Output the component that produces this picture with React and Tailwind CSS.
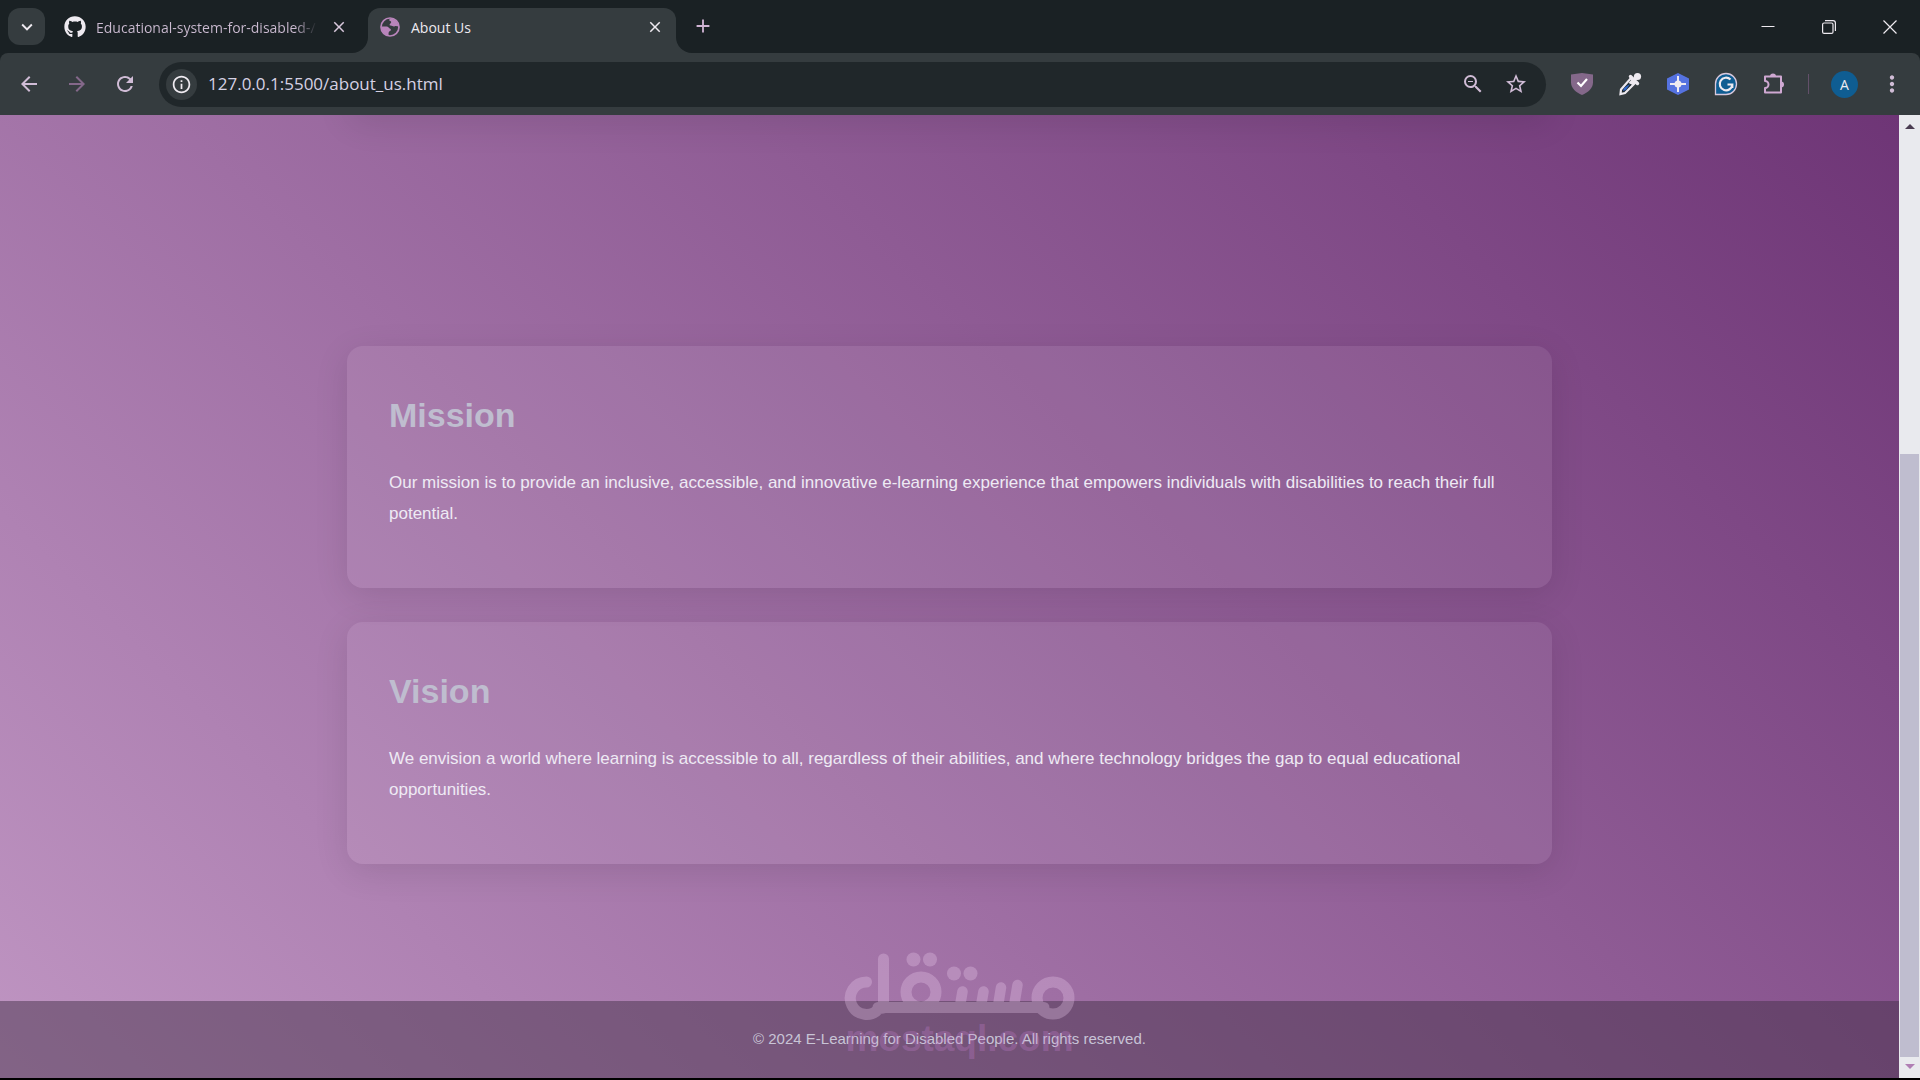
import React from 'react';
import {
  MdArrowBack,
  MdArrowForward,
  MdRefresh,
  MdOutlineInfo,
  MdZoomOut,
  MdStarBorder,
  MdMoreVert,
  MdClose,
  MdAdd,
  MdKeyboardArrowDown,
} from 'react-icons/md';
import { FaGithub } from 'react-icons/fa';

const sections = [
  {
    title: 'Mission',
    text: 'Our mission is to provide an inclusive, accessible, and innovative e-learning experience that empowers individuals with disabilities to reach their full potential.',
  },
  {
    title: 'Vision',
    text: 'We envision a world where learning is accessible to all, regardless of their abilities, and where technology bridges the gap to equal educational opportunities.',
  },
];

const GlobeIcon = () => (
  <svg width="20" height="20" viewBox="0 0 20 20" fill="none">
    <circle cx="10" cy="10" r="9" stroke="#b985bb" strokeWidth="1.7" />
    <path d="M10 1.5c-1 .8-1 2.2.2 2.6 1.5.4 1.2 1.6.2 2.3-1.2.8-1 2 .2 2.2 1.8.2 2.6 1.2 4.2.6 1.5-.5 2.6.2 3.7.4C18.300 4.800 14.800 1.500 10 1.500z" fill="#b985bb" />
    <path d="M1.4 9.5h5.200c1.800 0 2 1.500 3.200 2 1.400.5 1.600 2 .2 2.600-1.200.5-1.600 1.500-1.400 4.500C4.500 18 1.300 14 1.400 9.500z" fill="#b985bb" />
  </svg>
);

const TabStrip = () => (
  <div className="flex h-[53px] shrink-0 items-end bg-[#1a2124]">
    <button aria-label="Search tabs" className="mb-2 ml-2 flex h-[37px] w-[37px] items-center justify-center rounded-xl bg-[#353c3f] text-[#eeeaf0]">
      <MdKeyboardArrowDown size={22} />
    </button>

    <div className="ml-[19px] flex h-[45px] w-[304px] items-center pb-[7px]">
      <FaGithub size={22} className="shrink-0 text-[#eeeaf0]" />
      <span className="ml-[10px] w-[221px] overflow-hidden whitespace-nowrap bg-linear-to-r from-[#ccbcd2] from-90% to-transparent bg-clip-text text-[14px] text-transparent">
        Educational-system-for-disabled-/
      </span>
      <button aria-label="Close tab" className="ml-[13px] text-[#d8c8dc]">
        <MdClose size={18} />
      </button>
    </div>

    <div className="relative flex h-[45px] w-[308px] items-center rounded-t-xl bg-[#353c3f] px-3 pb-[7px]">
      <span className="absolute bottom-0 -left-4 h-4 w-4 overflow-hidden">
        <span className="block h-4 w-4 rounded-br-2xl shadow-[8px_8px_0_8px_#353c3f]" />
      </span>
      <span className="absolute -right-4 bottom-0 h-4 w-4 overflow-hidden">
        <span className="block h-4 w-4 rounded-bl-2xl shadow-[-8px_8px_0_8px_#353c3f]" />
      </span>
      <GlobeIcon />
      <span className="ml-[11px] flex-1 text-[14px] text-[#eeeaf0]">About Us</span>
      <button aria-label="Close tab" className="text-[#eeeaf0]">
        <MdClose size={18} />
      </button>
    </div>
    <button aria-label="New tab" className="mb-4 ml-4 text-[#d0b4d4]">
      <MdAdd size={22} />
    </button>

    <div className="ml-auto flex h-full items-center text-[#eeeaf0]">
      <button aria-label="Minimize" className="flex w-[61px] justify-center">
        <svg width="14" height="14" viewBox="0 0 14 14" stroke="currentColor">
          <path d="M0.5 6.5h13" />
        </svg>
      </button>
      <button aria-label="Restore" className="flex w-[61px] justify-center">
        <svg width="14" height="14" viewBox="0 0 14 14" fill="none" stroke="currentColor" strokeWidth="1.2">
          <rect x="0.6" y="3" width="10.4" height="10.4" rx="1.5" />
          <path d="M3 .6h8a2.4 2.4 0 0 1 2.4 2.4v8" />
        </svg>
      </button>
      <button aria-label="Close" className="flex w-[61px] justify-center">
        <svg width="14" height="14" viewBox="0 0 14 14" stroke="currentColor" strokeWidth="1.2">
          <path d="M.5.5l13 13M13.5.5l-13 13" />
        </svg>
      </button>
    </div>
  </div>
);

const ShieldIcon = () => (
  <svg width="24" height="24" viewBox="0 0 24 24">
    <path d="M12 1l11 1.500v8C23 16 18 20.500 12 23 6 20.500 1 16 1 10.500v-8z" fill="#84688a" />
    <path d="M7.500 10.500l3.500 3.500 6-7" fill="none" stroke="#fff" strokeWidth="2.2" />
  </svg>
);

const DropperIcon = () => (
  <svg width="24" height="24" viewBox="0 0 24 24">
    <path d="M2.500 22l.5-4.500L13 6l4.500 4.500L7 21z" fill="#1f2a30" stroke="#eeeaf0" strokeWidth="2.200" />
    <path d="M5 19l1-3 3.500-2.500L12 12l-4 6z" fill="#2f66c8" />
    <path d="M10.500 11l4.500-5 3.500 3.500-4 3.500z" fill="#eeeaf0" />
    <path d="M12.500 4.500l7 7M15.500 8.500l4-4" stroke="#eeeaf0" strokeWidth="3.400" strokeLinecap="round" />
    <circle cx="19.500" cy="4.500" r="3.600" fill="#eeeaf0" />
  </svg>
);

const HexIcon = () => (
  <svg width="24" height="24" viewBox="0 0 24 24">
    <path d="M12 1l11 5.500v11L12 23 1 17.500v-11z" fill="#5572e0" />
    <path d="M12 4v16M4 12h16" stroke="#eeeaf0" strokeWidth="2" />
    <circle cx="12" cy="12" r="3.500" fill="#eeeaf0" />
  </svg>
);

const GrammarIcon = () => (
  <svg width="24" height="24" viewBox="0 0 24 24">
    <path d="M1.500 22.500V12A10.500 10.500 0 1 1 12 22.500z" fill="#0f5d92" stroke="#d8c8dc" strokeWidth="1.300" />
    <path d="M16.500 7.600A6.300 6.300 0 1 0 18.300 12.500H13.500M18.300 12.500v3.500" fill="none" stroke="#eeeaf0" strokeWidth="2.200" />
  </svg>
);

const PuzzleIcon = () => (
  <svg width="24" height="24" viewBox="0 0 24 24">
    <path d="M3 4.500h16v16H3v-4.500a3.500 3.500 0 0 0 0-7z" fill="none" stroke="#cfa8d2" strokeWidth="2" strokeLinejoin="round" />
    <path d="M8 4.500a3 3 0 0 1 6 0zM19 9.500a3 3 0 0 1 0 6z" fill="#cfa8d2" />
  </svg>
);

const Toolbar = () => (
  <div className="bg-[#1a2124]">
    <div className="flex h-[62px] items-center rounded-t-lg bg-[#353c3f] pl-[17px] text-[#d0bcd6]">
      <button aria-label="Back"><MdArrowBack size={24} /></button>
      <button aria-label="Forward" className="ml-6 text-[#84688a]"><MdArrowForward size={24} /></button>
      <button aria-label="Reload" className="ml-6"><MdRefresh size={24} /></button>

      <div className="ml-[22px] flex h-[45px] flex-1 items-center rounded-full bg-[#20272a] pr-[18px] pl-[7px]">
        <button aria-label="Site information" className="flex h-[31px] w-[31px] items-center justify-center rounded-full bg-[#353c3f] text-[#eeeaf0]">
          <MdOutlineInfo size={21} />
        </button>
        <input
          aria-label="Address"
          className="ml-[11px] min-w-0 flex-1 bg-transparent pb-px text-[17px] text-[#d6d2e4] outline-none"
          defaultValue="127.0.0.1:5500/about_us.html"
        />
        <button aria-label="Zoom"><MdZoomOut size={24} /></button>
        <button aria-label="Bookmark" className="ml-[19px]"><MdStarBorder size={24} /></button>
      </div>

      <div className="ml-6 flex items-center gap-6">
        <button aria-label="Shield"><ShieldIcon /></button>
        <button aria-label="Color picker"><DropperIcon /></button>
        <button aria-label="Inspector"><HexIcon /></button>
        <button aria-label="Writing assistant"><GrammarIcon /></button>
        <button aria-label="Extensions"><PuzzleIcon /></button>
      </div>
      <span className="ml-[22px] h-5 w-px bg-[#63506a]" />
      <button aria-label="Profile" className="ml-[22px] flex h-[27px] w-[27px] items-center justify-center rounded-full bg-[#0f5d92] text-[14px] text-[#eeeaf0]">
        A
      </button>
      <button aria-label="Menu" className="mr-[15px] ml-[21px]"><MdMoreVert size={26} /></button>
    </div>
  </div>
);

const Scrollbar = () => (
  <div className="flex w-[21px] shrink-0 flex-col items-center bg-[#e9eaee]">
    <svg className="mt-2 shrink-0" width="12" height="6" viewBox="0 0 12 6">
      <path d="M1 6l5-5 5 5z" fill="#4b3d52" />
    </svg>
    <div className="flex w-full flex-1 flex-col justify-end px-px pb-[7px]">
      <div className="h-[65%] bg-[#bfbdcf]" />
    </div>
    <svg className="mb-2 shrink-0" width="12" height="6" viewBox="0 0 12 6">
      <path d="M1 0l5 5 5-5z" fill="#b07fb4" />
    </svg>
  </div>
);

const Watermark = () => (
  <div className="pointer-events-none absolute bottom-[22px] left-1/2 ml-[-106px] flex w-[232px] flex-col items-center">
    <svg width="232" height="70" viewBox="0 0 232 70" fill="none" stroke="#eccdee" strokeWidth="11" strokeLinecap="round" className="shrink-0 opacity-30">
      <path d="M22.500 30A16.200 16.200 0 1 0 35 56.500L39 56" />
      <path d="M39.500 7v48" />
      <path d="M34 55.500H200" />
      <circle cx="77" cy="40" r="15" />
      <circle cx="209" cy="46" r="16" />
      <path d="M118.500 39.500L116 54M139.500 39.500L137 54M157 35.500L154 54M173.500 33L170 54" strokeWidth="10.500" />
      <g fill="#eccdee" stroke="none">
        <circle cx="69.500" cy="7.500" r="7" />
        <circle cx="86" cy="7.500" r="7" />
        <circle cx="110" cy="21.500" r="7" />
        <circle cx="126.500" cy="21.500" r="7" />
      </g>
    </svg>
    <span className="text-[37px] leading-[34px] font-bold text-[#c67fd0]/30">mostaql.com</span>
  </div>
);

const AboutPage = () => (
  <div className="relative flex min-w-0 flex-1 flex-col overflow-hidden bg-[linear-gradient(45deg,#bf95c2,#6e3576)] font-['Liberation_Sans',Arial,sans-serif]">
    <main className="mx-auto flex w-full max-w-[1205px] flex-1 flex-col gap-[34px]">
      {/* bottom edge of the section that is scrolled out of view */}
      <div className="-mt-[34px] mb-[197px] h-[34px] rounded-2xl shadow-[0_8px_34px_rgba(0,0,0,0.1)]" />
      {sections.map((section) => (
        <section key={section.title} className="rounded-2xl bg-white/7 p-[42px] shadow-[0_8px_34px_rgba(0,0,0,0.1)]">
          <h2 className="mt-2 mb-[33px] text-[34px] leading-[38px] font-bold text-[#bfbdcf]">{section.title}</h2>
          <p className="mb-[17px] text-[17px] leading-[31px] text-[#eeeaf4]">{section.text}</p>
        </section>
      ))}
    </main>
    <footer className="flex h-[77px] shrink-0 items-center justify-center bg-[#45324a]/50 text-[15px] text-[#c8c4d6]">
      <p>© 2024 E-Learning for Disabled People. All rights reserved.</p>
    </footer>
    <Watermark />
  </div>
);

const App = () => (
  <div className="flex h-screen flex-col border-b-2 border-black bg-[#353c3f] font-['Open_Sans','Noto_Sans',sans-serif]">
    <TabStrip />
    <Toolbar />
    <div className="flex min-h-0 flex-1">
      <AboutPage />
      <Scrollbar />
    </div>
  </div>
);

export default App;
